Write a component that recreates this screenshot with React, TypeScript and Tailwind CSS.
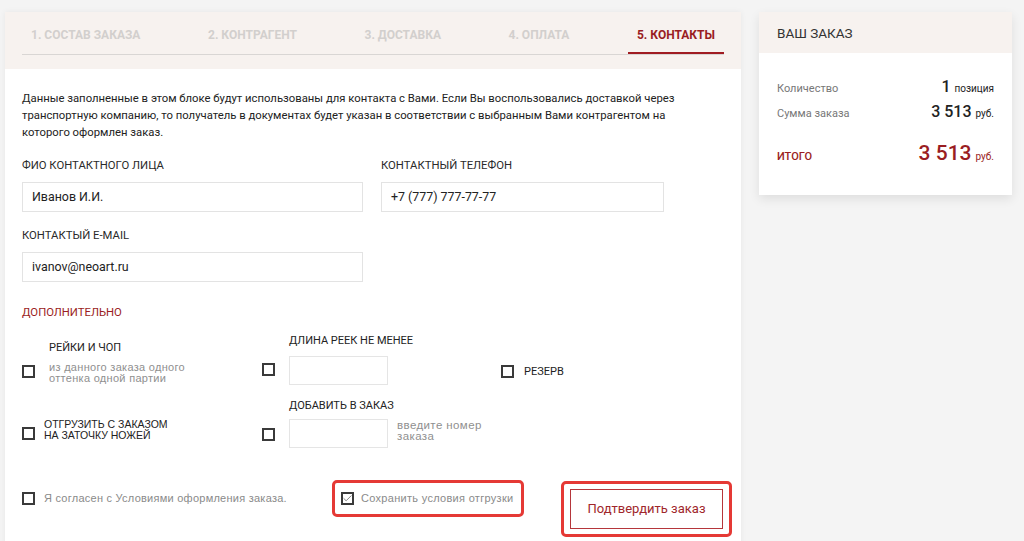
import { Check } from 'lucide-react'

const font = { fontFamily: 'Roboto, "Liberation Sans", sans-serif' }
const arial = { fontFamily: '"Liberation Sans", Arial, sans-serif' }

const tabs = ['1. Состав заказа', '2. Контрагент', '3. Доставка', '4. Оплата', '5. Контакты']

function Box({ checked = false, className = '' }: { checked?: boolean; className?: string }) {
  return (
    <span
      className={`flex h-[13px] w-[13px] shrink-0 items-center justify-center border-2 border-[#3a3a3a] bg-white ${className}`}
    >
      {checked && <Check size={11} strokeWidth={1.6} className="shrink-0 text-[#555]" />}
    </span>
  )
}

function Field({ label, value, className = '' }: { label: string; value: string; className?: string }) {
  return (
    <div className={className}>
      <p className="text-[11.3px] leading-[14px] uppercase text-[#2a2a2a]">{label}</p>
      <div className="mt-[9px] flex h-[30px] items-center border border-[#e3e3e3] px-[9px] text-[12.4px] text-[#222]">
        {value}
      </div>
    </div>
  )
}

function SmallInput() {
  return <div className="h-[29px] w-[99px] border border-[#e5e5e5] bg-white" />
}

export default function App() {
  return (
    <div style={font} className="flex min-h-[541px] items-start gap-[18px] overflow-hidden bg-[#f4f4f4] pt-[12px] pl-[5px]">
      <div className="h-[560px] w-[736px] shrink-0 bg-white shadow-[0_0_6px_rgba(0,0,0,0.06)]">
        <div className="h-[57px] bg-[#f7f2ef] px-[17px]">
          <div className="flex justify-between border-b border-[#d9d6d4]">
            {tabs.map((t, i) => (
              <div
                key={t}
                className={`h-[42px] px-[9px] pt-[16px] text-[12px] leading-[14px] font-bold uppercase ${
                  i === 4 ? '-mb-px border-b-2 border-[#a01c22] text-[#9a1d22]' : 'text-[#d2cfcd]'
                }`}
              >
                {t}
              </div>
            ))}
          </div>
        </div>

        <div className="px-[17px] pt-[21px]">
          <p className="max-w-[672px] text-[11.3px] leading-[17px] text-[#222]">
            Данные заполненные в этом блоке будут использованы для контакта с Вами. Если Вы воспользовались доставкой через
            транспортную компанию, то получатель в документах будет указан в соответствии с выбранным Вами контрагентом на
            которого оформлен заказ.
          </p>

          <div className="mt-[18px] grid grid-cols-[341px_283px] gap-x-[18px]">
            <Field label="ФИО контактного лица" value="Иванов И.И." />
            <Field label="Контактный телефон" value="+7 (777) 777-77-77" />
            <Field label="Контактый e-mail" value="ivanov@neoart.ru" className="mt-[17px]" />
          </div>

          <p className="mt-[24px] text-[11.3px] leading-[14px] uppercase text-[#9a1d22]">Дополнительно</p>

          <div className="mt-[14px] grid grid-cols-[240px_239px_1fr]">
            <div className="flex items-start">
              <Box className="mt-[31px]" />
              <div className="ml-[14px] mt-[7px]">
                <p className="text-[11px] leading-[14px] uppercase text-[#222]">Рейки и чоп</p>
                <p style={arial} className="mt-[7px] text-[11px] leading-[11px] tracking-[0.3px] text-[#8f8f8f]">
                  из данного заказа одного
                  <br />
                  оттенка одной партии
                </p>
              </div>
            </div>
            <div className="flex items-start">
              <Box className="mt-[29px]" />
              <div className="ml-[14px]">
                <p className="text-[11px] leading-[14px] uppercase text-[#222]">Длина реек не менее</p>
                <div className="mt-[8px]">
                  <SmallInput />
                </div>
              </div>
            </div>
            <div className="flex items-start">
              <Box className="mt-[31px]" />
              <p className="ml-[10px] mt-[31px] text-[11px] leading-[14px] uppercase text-[#222]">Резерв</p>
            </div>

            <div className="mt-[14px] flex items-start">
              <Box className="mt-[28px]" />
              <p style={arial} className="ml-[9px] mt-[20px] text-[10.5px] leading-[11px] uppercase text-[#222]">
                Отгрузить с заказом
                <br />
                на заточку ножей
              </p>
            </div>
            <div className="mt-[14px] flex items-start">
              <Box className="mt-[29px]" />
              <div className="ml-[14px]">
                <p className="text-[11px] leading-[14px] uppercase text-[#222]">Добавить в заказ</p>
                <div className="mt-[6px] flex items-start gap-[9px]">
                  <SmallInput />
                  <p style={arial} className="mt-px text-[11.5px] leading-[11px] tracking-[0.4px] text-[#8f8f8f]">
                    введите номер
                    <br />
                    заказа
                  </p>
                </div>
              </div>
            </div>
          </div>

          <div className="mt-[32px] flex items-start">
            <div className="flex h-[37px] w-[310px] shrink-0 items-center gap-[9px]">
              <Box />
              <span style={arial} className="text-[11px] tracking-[0.25px] text-[#8a8a8a]">
                Я согласен с Условиями оформления заказа.
              </span>
            </div>
            <div className="flex h-[37px] w-[192px] shrink-0 items-center gap-[7px] rounded-[5px] border-[3px] border-[#e53935] pl-[6px]">
              <Box checked />
              <span style={arial} className="text-[11px] tracking-[0.3px] text-[#8a8a8a]">
                Сохранить условия отгрузки
              </span>
            </div>
            <div className="ml-[37px] mt-px h-[56px] w-[171px] shrink-0 rounded-[5px] border-[3px] border-[#e53935] pl-[6px] pt-[5px]">
              <button className="flex h-[40px] w-[153px] items-center justify-center border border-[#b5363b] text-[13px] text-[#a0262b]">
                Подтвердить заказ
              </button>
            </div>
          </div>
        </div>
      </div>

      <div className="w-[253px] shrink-0 bg-white shadow-[0_4px_10px_rgba(0,0,0,0.09)]">
        <div className="flex h-[41px] items-center bg-[#f7f2ef] px-[18px] pt-[2px] text-[13.5px] uppercase text-[#333]">
          Ваш заказ
        </div>
        <div className="px-[18px] pt-[25px] pb-[30px] text-[#222]">
          <div className="flex h-[18px] items-baseline justify-between leading-[18px]">
            <span className="text-[11px] text-[#777]">Количество</span>
            <span>
              <span className="text-[16px] font-medium">1</span> <span className="text-[10px]">позиция</span>
            </span>
          </div>
          <div className="mt-[7px] flex h-[18px] items-baseline justify-between leading-[18px]">
            <span className="text-[11px] text-[#777]">Сумма заказа</span>
            <span>
              <span className="text-[16px] font-medium">3 513</span> <span className="text-[10px]">руб.</span>
            </span>
          </div>
          <div className="mt-[20px] flex h-[24px] items-baseline justify-between leading-[24px]">
            <span className="text-[11px] font-medium uppercase text-[#9a1d22]">Итого</span>
            <span className="text-[#9a1d22]">
              <span className="text-[21px] font-medium">3 513</span> <span className="text-[10px]">руб.</span>
            </span>
          </div>
        </div>
      </div>
    </div>
  )
}
